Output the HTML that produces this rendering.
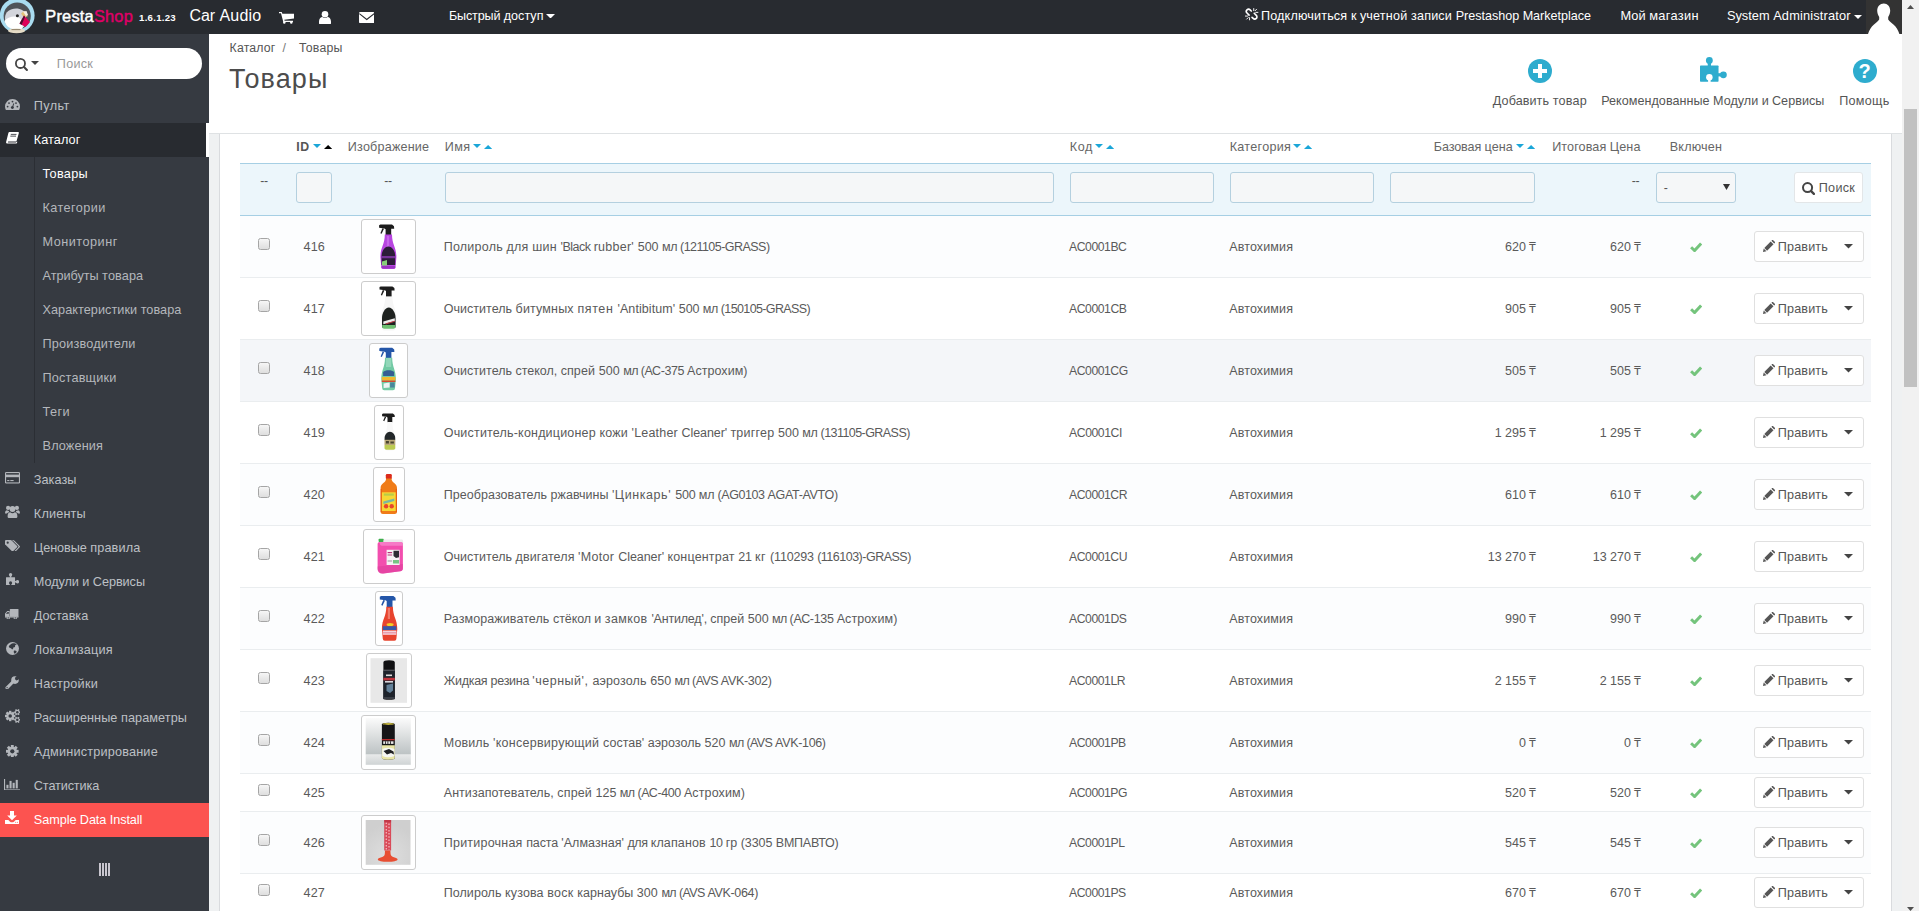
<!DOCTYPE html>
<html lang="ru"><head><meta charset="utf-8"><title>Товары</title>
<style>
*{box-sizing:border-box;margin:0;padding:0}
html,body{width:1919px;height:911px;overflow:hidden;background:#eff1f2;font-family:"Liberation Sans",sans-serif;font-size:12px;color:#555}
.abs{position:absolute}
.t{position:absolute;white-space:nowrap}
b{font-weight:700}
#header{position:absolute;left:0;top:0;width:1902px;height:34px;background:#282b30}
#sidebar{position:absolute;left:0;top:34px;width:209px;height:877px;background:#363a41}
#pagehead{position:absolute;left:209px;top:34px;width:1693px;height:100px;background:#fff;border-bottom:1px solid #dfe2e4}
#panel{position:absolute;left:219px;top:134px;width:1673px;height:800px;background:#fff;border:1px solid #d9dbde;border-top:none}
#scroll{position:absolute;left:1902px;top:0;width:17px;height:911px;background:#f1f1f1}
#thumb{position:absolute;left:1904px;top:109px;width:13px;height:278px;background:#c1c1c1}
.row{position:absolute;left:240px;width:1631px;border-bottom:1px solid #eaedef}
.inp{position:absolute;height:31px;background:#f5f7f8;border:1px solid #b4d0df;border-radius:3px}
.btn{position:absolute;background:#fff;border:1px solid #e0e0e0;border-radius:3px}
.th{position:absolute;background:#fff;border:1px solid #ccc;border-radius:3px;overflow:hidden}
.th svg{display:block}
.cb{position:absolute;width:12px;height:12px;border:1px solid #a5a5a5;border-radius:2.5px;background:linear-gradient(#f6f6f6,#dedede)}
</style></head>
<body>
<div id="header"></div>
<div id="sidebar"></div>
<div id="pagehead"></div>
<div id="panel"></div>
<div id="scroll"></div><div id="thumb"></div>
<svg class="abs" style="left:1907px;top:5px" width="7" height="4" viewBox="0 0 7 4"><polygon fill="#505050" points="0,4 7,4 3.5,0"/></svg>
<svg class="abs" style="left:1907px;top:907px" width="7" height="4" viewBox="0 0 7 4"><polygon fill="#505050" points="0,0 7,0 3.5,4"/></svg>
<svg class="abs" style="left:0;top:0" width="36" height="34" viewBox="0 0 36 34"><circle cx="17.2" cy="15.4" r="17.4" fill="#a9dcf0"/><circle cx="17.2" cy="16" r="13.6" fill="#4f5358"/><path fill="#d3d5dc" d="M5 18c0-6 5-9.500 11-9.500 5 0 8.500 2.500 10.500 5.500L24 27H8C6 25 5 22 5 18z"/><path fill="#fff" d="M4.500 21c2-3 6-4.500 10-4.500 3 0 5 1 6.500 3L23 28c-2 1.500-4 2-6 2-6 0-11-3.500-12.500-9z"/><path fill="#e2c27a" d="M21 13.500l3-2.500 3 2 .5 3.500-4 .5z"/><path fill="#f4efe6" d="M23 11.500l3.500-.5 1.500 4-2 1z"/><path fill="#df0059" d="M24 15.500l6 6.500-4.500 5-6-3.500z"/><path fill="#4a1030" d="M19.500 23.500l4.500-8 1 1.500-3.500 8z"/><circle cx="17.400" cy="15.800" r="1.500" fill="#222"/><ellipse cx="16.500" cy="30.800" rx="8.500" ry="2.400" fill="#e6dcc6"/><path stroke="#7a6a50" stroke-width=".8" d="M11.500 29.600h9"/></svg>
<div class="t" style="left:45.32px;top:6px;font-size:16.4px;line-height:21px;color:#fff;letter-spacing:0.201px;-webkit-text-stroke:0.45px;"><span style="color:#fff">Presta</span><span style="color:#df0067">Shop</span></div>
<div class="t" style="left:139.02px;top:12px;font-size:9.6px;line-height:12px;color:#fff;font-weight:700;letter-spacing:0.288px;">1.6.1.23</div>
<div class="t" style="left:189.54px;top:5px;font-size:16px;line-height:21px;color:#fff;"><span style="letter-spacing:-0.06px">Car </span><span style="letter-spacing:0.17px">Audio</span></div>
<svg class="abs" style="left:278.7px;top:11.5px" width="15" height="12" viewBox="0 0 15 12"><path fill="#fff" d="M0 0h2.7l.7 1.7H15v4.7L5.3 7.7l.3 1.1H14v1.3H4.3L2 1.3H0z"/><circle fill="#fff" cx="5.3" cy="10.4" r="1.25"/><circle fill="#fff" cx="12.3" cy="10.4" r="1.25"/></svg>
<svg class="abs" style="left:318.8px;top:10.6px" width="12" height="13" viewBox="0 0 12 13"><circle fill="#fff" cx="6" cy="3.3" r="3.3"/><path fill="#fff" d="M0 12.6V10.4C0 7.6 1.6 6 3.4 5.9c.7.7 1.6 1.1 2.6 1.1s1.9-.4 2.6-1.1C10.4 6 12 7.6 12 10.4v2.2c0 .2-.2.4-.4.4H.4c-.2 0-.4-.2-.4-.4z"/></svg>
<svg class="abs" style="left:358.7px;top:12px" width="15.5" height="11.2" viewBox="0 0 15.5 11.2"><rect fill="#fff" x="0" y="0" width="15.5" height="11.2" rx="1.2"/><path fill="none" stroke="#282b30" stroke-width="1.1" d="M.3 1.6l7.45 5.9 7.45-5.9"/></svg>
<div class="t" style="left:448.94px;top:8px;font-size:12.6px;line-height:16px;color:#fff;"><span style="letter-spacing:-0.15px">Быстрый </span><span style="letter-spacing:0.02px">доступ</span></div>
<svg class="abs" style="left:546.3px;top:13.7px" width="9" height="4.5" viewBox="0 0 9 4.5"><polygon fill="#fff" points="0,0 9,0 4.5,4.5"/></svg>
<svg class="abs" style="left:1245.3px;top:8.3px" width="13.30" height="12.35" viewBox="0 0 14 13"><g fill="none" stroke="#fff" stroke-width="1.7" stroke-linecap="round" stroke-linejoin="round"><path d="M6.6 3.2L5.4 2a2.3 2.3 0 0 0-3.3 3.3l2.2 2.2"/><path d="M7.4 9.8l1.2 1.2a2.3 2.3 0 0 0 3.3-3.3L9.7 5.5"/></g><g fill="none" stroke="#fff" stroke-width="1" stroke-linecap="round"><path d="M9.2.6v2.2M11.3 4.6h2.3M10.6 2.9l1.6-1.6M4.8 10.2v2.3M.4 8.5h2.3M3.4 10.1l-1.6 1.6"/></g></svg>
<div class="t" style="left:1260.94px;top:8px;font-size:12.6px;line-height:16px;color:#fff;"><span style="letter-spacing:0.17px">Подключиться </span><span style="letter-spacing:-0.06px">к </span><span style="letter-spacing:0.18px">учетной записи </span><span style="letter-spacing:-0.03px">Prestashop Marketplace</span></div>
<div class="t" style="left:1620.53px;top:7px;font-size:12.8px;line-height:17px;color:#fff;"><span style="letter-spacing:-0.00px">Мой </span><span style="letter-spacing:0.34px">магазин</span></div>
<div class="t" style="left:1726.93px;top:7px;font-size:12.8px;line-height:17px;color:#fff;"><span style="letter-spacing:0.00px">System </span><span style="letter-spacing:0.16px">Administrator</span></div>
<svg class="abs" style="left:1853.5px;top:15px" width="8" height="4" viewBox="0 0 8 4"><polygon fill="#fff" points="0,0 8,0 4.0,4"/></svg>
<div class="abs" style="left:1866px;top:0;width:36px;height:34px;background:#333"></div>
<svg class="abs" style="left:1866px;top:0" width="36" height="34" viewBox="0 0 36 34"><path fill="#fff" d="M17.800 3.400c3.700 0 6.400 2.900 6.400 7.200 0 2.600-.8 4.800-2 6.400v2.600c1.500 2 3.500 3.600 5.500 5.200 2.500 2 4.500 5.500 5.700 9.200H2c1.200-3.700 3.200-7.200 5.700-9.200 2-1.600 4-3.200 5.500-5.200v-2.600c-1.200-1.600-2-3.800-2-6.400 0-4.300 2.800-7.200 6.600-7.200z"/></svg>
<div class="abs" style="left:6px;top:48px;width:196px;height:31px;border-radius:15.5px;background:#fff"></div>
<svg class="abs" style="left:15px;top:57.6px" width="13" height="13" viewBox="0 0 13 13"><circle fill="none" stroke="#444" stroke-width="1.8" cx="5.45" cy="5.45" r="4.55"/><path stroke="#444" stroke-width="2.07" stroke-linecap="round" d="M9.00 9.00L11.90 11.90"/></svg>
<svg class="abs" style="left:31px;top:61.2px" width="8" height="4" viewBox="0 0 8 4"><polygon fill="#444" points="0,0 8,0 4.0,4"/></svg>
<div class="t" style="left:56.84px;top:56px;font-size:12.6px;line-height:16px;color:#999;letter-spacing:0.287px;">Поиск</div>
<div class="abs" style="left:0;top:123px;width:206px;height:34px;background:#282b30"></div>
<div class="abs" style="left:206px;top:123px;width:3px;height:34px;background:#fff"></div>
<div class="abs" style="left:34px;top:157px;width:1px;height:306px;background:#2b2e34"></div>
<svg class="abs" style="left:5px;top:98.8px" width="15" height="11.2" viewBox="0 0 15 11.2"><path fill="#b3b6bb" d="M7.5 0A7.5 7.5 0 0 0 0 7.5c0 1.3.3 2.4.9 3.4.1.2.3.3.5.3h12.2c.2 0 .4-.1.5-.3.6-1 .9-2.1.9-3.4A7.5 7.5 0 0 0 7.5 0z"/><g fill="#363a41"><circle cx="2.6" cy="7.6" r=".9"/><circle cx="4" cy="4.1" r=".9"/><circle cx="7.5" cy="2.6" r=".9"/><circle cx="11" cy="4.1" r=".9"/><circle cx="12.4" cy="7.6" r=".9"/><circle cx="7.4" cy="8.6" r="1.5"/></g><path stroke="#363a41" stroke-width="1" stroke-linecap="round" d="M7.6 8.2l1-3.4"/></svg>
<div class="t" style="left:33.74px;top:98px;font-size:12.7px;line-height:17px;color:#bdc0c5;letter-spacing:0.409px;">Пульт</div>
<svg class="abs" style="left:5.8px;top:132px" width="13.06" height="11.59" viewBox="0 0 14.2 12.6"><path fill="#fff" d="M4 0h9.2c.7 0 1 .5.8 1.1L11.6 9.4c-.2.6-.8 1-1.4 1H2.4l-.3.6c-.1.3.1.5.4.5h8.3l.6-1 1 .1-.5 1.3c-.2.4-.6.7-1.1.7H1.6C.6 12.600-.2 11.700.1 10.800L2.600 1.1C2.800.5 3.400 0 4 0z"/><path stroke="#282b30" stroke-width=".9" d="M5.2 2.6h6.2M4.7 4.5h6.2"/></svg>
<div class="t" style="left:33.74px;top:132px;font-size:12.7px;line-height:17px;color:#fff;letter-spacing:0.083px;">Каталог</div>
<div class="t" style="left:42.54px;top:166px;font-size:12.7px;line-height:17px;color:#fff;letter-spacing:0.297px;">Товары</div>
<div class="t" style="left:42.54px;top:200px;font-size:12.7px;line-height:17px;color:#b4b7bc;letter-spacing:0.396px;">Категории</div>
<div class="t" style="left:42.54px;top:234px;font-size:12.7px;line-height:17px;color:#b4b7bc;letter-spacing:0.491px;">Мониторинг</div>
<div class="t" style="left:42.54px;top:268px;font-size:12.7px;line-height:17px;color:#b4b7bc;"><span style="letter-spacing:-0.04px">Атрибуты </span><span style="letter-spacing:0.11px">товара</span></div>
<div class="t" style="left:42.54px;top:302px;font-size:12.7px;line-height:17px;color:#b4b7bc;letter-spacing:0.035px;">Характеристики товара</div>
<div class="t" style="left:42.54px;top:336px;font-size:12.7px;line-height:17px;color:#b4b7bc;letter-spacing:0.165px;">Производители</div>
<div class="t" style="left:42.54px;top:370px;font-size:12.7px;line-height:17px;color:#b4b7bc;letter-spacing:0.182px;">Поставщики</div>
<div class="t" style="left:42.54px;top:404px;font-size:12.7px;line-height:17px;color:#b4b7bc;letter-spacing:0.430px;">Теги</div>
<div class="t" style="left:42.54px;top:438px;font-size:12.7px;line-height:17px;color:#b4b7bc;letter-spacing:0.139px;">Вложения</div>
<div class="t" style="left:33.84px;top:472px;font-size:12.7px;line-height:17px;color:#bdc0c5;letter-spacing:0.027px;">Заказы</div>
<svg class="abs" style="left:4.7px;top:472.3px" width="15.00" height="11.50" viewBox="0 0 15 11.5"><rect fill="#b3b6bb" x="0" y="0" width="15" height="11.5" rx="1.3"/><rect fill="#363a41" x="1.1" y="1.1" width="12.8" height="1.5"/><rect fill="#363a41" x="1.1" y="5.2" width="12.8" height="5.2"/><rect fill="#b3b6bb" x="2.2" y="8" width="2.2" height="1.1"/><rect fill="#b3b6bb" x="5.3" y="8" width="3.3" height="1.1"/></svg>
<div class="t" style="left:33.84px;top:506px;font-size:12.7px;line-height:17px;color:#bdc0c5;letter-spacing:0.158px;">Клиенты</div>
<svg class="abs" style="left:4.8px;top:505.3px" width="15.00" height="13.00" viewBox="0 0 15 13"><g fill="#b3b6bb"><circle cx="3.1" cy="2.9" r="2.1"/><circle cx="11.9" cy="2.9" r="2.1"/><circle cx="7.5" cy="4" r="2.9"/><path d="M0 8.600C0 6.300.8 5.300 2 5.200c.6.500 1.300.8 2 .800-.1.400-.1.800 0 1.300-1 .100-1.600.600-2 1.300H.8C.3 8.600 0 8.400 0 8z"/><path d="M15 8.600C15 6.300 14.200 5.300 13 5.200c-.6.500-1.300.8-2 .800.1.400.1.800 0 1.300 1 .100 1.600.600 2 1.300h1.200c.500 0 .8-.2.800-.6z"/><path d="M2.600 11.400C2.600 8.800 3.700 7.300 5.200 7.300c.6.600 1.400.9 2.300.9s1.700-.3 2.300-.9c1.500 0 2.600 1.500 2.600 4.100 0 .9-.7 1.600-1.700 1.600H4.300c-1 0-1.700-.7-1.700-1.600z"/></g></svg>
<div class="t" style="left:33.84px;top:540px;font-size:12.7px;line-height:17px;color:#bdc0c5;"><span style="letter-spacing:-0.06px">Ценовые </span><span style="letter-spacing:0.11px">правила</span></div>
<svg class="abs" style="left:4.7px;top:539.6px" width="15.20" height="11.60" viewBox="0 0 15.2 11.6"><path fill="#b3b6bb" d="M0 .9C0 .4.400 0 .9 0h4.400c.5 0 1.200.3 1.600.7l5.200 5.200c.4.400.4.900 0 1.300l-3.900 3.900c-.4.400-.9.400-1.300 0L1.700 5.900C1.300 5.500 0 4.800 0 4.300z"/><circle fill="#363a41" cx="2.700" cy="2.700" r="1.100"/><path fill="#b3b6bb" d="M14.700 5.900L9.500.7C9.100.3 8.400 0 7.900 0H6.400c.5 0 1.200.3 1.600.7l5.200 5.200c.4.400.4.900 0 1.300L9.500 10.900l.2.200c.4.400.9.400 1.300 0l3.700-3.900c.4-.4.400-.9 0-1.300z"/></svg>
<div class="t" style="left:33.84px;top:574px;font-size:12.7px;line-height:17px;color:#bdc0c5;letter-spacing:-0.064px;">Модули и Сервисы</div>
<svg class="abs" style="left:5.6px;top:572.8px" width="13.20" height="12.32" viewBox="0 0 15 14"><g fill="#b3b6bb"><rect x="0" y="4.7" width="10.3" height="9.1" rx=".4"/><circle cx="5.200" cy="1.9" r="1.9"/><rect x="4.3" y="3" width="1.8" height="2.4"/><circle cx="13" cy="9.900" r="1.900"/><rect x="10" y="9" width="2.400" height="1.800"/></g><circle fill="#363a41" cx="5.200" cy="11.300" r="1.800"/><rect fill="#363a41" x="4.500" y="12.400" width="1.400" height="1.600"/></svg>
<div class="t" style="left:33.84px;top:608px;font-size:12.7px;line-height:17px;color:#bdc0c5;letter-spacing:-0.012px;">Доставка</div>
<svg class="abs" style="left:5.3px;top:608.8px" width="13.50" height="10.53" viewBox="0 0 15 11.7"><g fill="#b3b6bb"><rect x="5.4" y="0" width="9.600" height="8.600" rx=".6"/><path d="M0 5.400c0-.3.100-.6.300-.8l2-2.200c.2-.2.500-.3.800-.3h2v6.500H0z"/><rect x="0" y="8.200" width="15" height="1.300"/><circle cx="3.600" cy="9.900" r="1.800"/><circle cx="11.400" cy="9.900" r="1.800"/></g><path fill="#363a41" d="M1.200 5.200V4.900l1.700-1.700h1.300v2z"/><circle fill="#363a41" cx="3.600" cy="9.900" r=".8"/><circle fill="#363a41" cx="11.400" cy="9.900" r=".8"/></svg>
<div class="t" style="left:33.84px;top:642px;font-size:12.7px;line-height:17px;color:#bdc0c5;letter-spacing:0.203px;">Локализация</div>
<svg class="abs" style="left:6.1px;top:642.2px" width="13.00" height="13.00" viewBox="0 0 13 13"><circle fill="#b3b6bb" cx="6.5" cy="6.5" r="6.500"/><path fill="#363a41" d="M6.800 1.300c1.500-.2 3 .3 4 1.300-.6.300-1.200.2-1.600.7-.4.500.200 1.100-.300 1.600-.5.500-1.300.200-1.700.900-.3.600.300 1.300-.400 1.500-.8.300-1.300-.500-1.900-1-.7-.600-1.700-.400-2-1.300-.3-.9.500-1.700 1.300-2.300.8-.600 1.700-1.200 2.600-1.400z"/><path fill="#363a41" d="M8.300 8.600c.700-.3 1.600-.1 2.100.400.400.500.100 1.300-.300 1.800-.4.600-1 1-1.600.800-.6-.2-.6-.9-.7-1.500-.1-.6-.1-1.200.500-1.500z"/></svg>
<div class="t" style="left:33.84px;top:676px;font-size:12.7px;line-height:17px;color:#bdc0c5;letter-spacing:0.211px;">Настройки</div>
<svg class="abs" style="left:5.4px;top:675.8px" width="14.00" height="13.70" viewBox="0 -0.2 14 13.7"><path stroke="#b3b6bb" stroke-width="3.1" stroke-linecap="round" d="M2 11.600L8.800 4.800"/><circle fill="#b3b6bb" cx="10" cy="3.900" r="3.800"/><path fill="#363a41" d="M10.300 1.300L13.200-1.600l2.600 2.600-2.900 2.900-1.600.4-1.400-1.400z"/><circle fill="#363a41" cx="2.100" cy="11.500" r=".65"/></svg>
<div class="t" style="left:33.84px;top:710px;font-size:12.7px;line-height:17px;color:#bdc0c5;letter-spacing:0.058px;">Расширенные параметры</div>
<svg class="abs" style="left:4.6px;top:709.3px" width="15.50" height="14.00" viewBox="0 0 15.5 14"><circle fill="#b3b6bb" cx="5.2" cy="7" r="3.85"/><path stroke="#b3b6bb" stroke-width="2.39" d="M7.80 7.00L10.40 7.00"/><path stroke="#b3b6bb" stroke-width="2.39" d="M7.04 8.84L8.88 10.68"/><path stroke="#b3b6bb" stroke-width="2.39" d="M5.20 9.60L5.20 12.20"/><path stroke="#b3b6bb" stroke-width="2.39" d="M3.36 8.84L1.52 10.68"/><path stroke="#b3b6bb" stroke-width="2.39" d="M2.60 7.00L0.00 7.00"/><path stroke="#b3b6bb" stroke-width="2.39" d="M3.36 5.16L1.52 3.32"/><path stroke="#b3b6bb" stroke-width="2.39" d="M5.20 4.40L5.20 1.80"/><path stroke="#b3b6bb" stroke-width="2.39" d="M7.04 5.16L8.88 3.32"/><circle fill="#363a41" cx="5.2" cy="7" r="1.77"/><circle fill="#b3b6bb" cx="12.3" cy="3.2" r="2.37"/><path stroke="#b3b6bb" stroke-width="1.47" d="M13.90 3.20L15.50 3.20"/><path stroke="#b3b6bb" stroke-width="1.47" d="M13.10 4.59L13.90 5.97"/><path stroke="#b3b6bb" stroke-width="1.47" d="M11.50 4.59L10.70 5.97"/><path stroke="#b3b6bb" stroke-width="1.47" d="M10.70 3.20L9.10 3.20"/><path stroke="#b3b6bb" stroke-width="1.47" d="M11.50 1.81L10.70 0.43"/><path stroke="#b3b6bb" stroke-width="1.47" d="M13.10 1.81L13.90 0.43"/><circle fill="#363a41" cx="12.3" cy="3.2" r="1.22"/><circle fill="#b3b6bb" cx="12.3" cy="10.8" r="2.37"/><path stroke="#b3b6bb" stroke-width="1.47" d="M13.90 10.80L15.50 10.80"/><path stroke="#b3b6bb" stroke-width="1.47" d="M13.10 12.19L13.90 13.57"/><path stroke="#b3b6bb" stroke-width="1.47" d="M11.50 12.19L10.70 13.57"/><path stroke="#b3b6bb" stroke-width="1.47" d="M10.70 10.80L9.10 10.80"/><path stroke="#b3b6bb" stroke-width="1.47" d="M11.50 9.41L10.70 8.03"/><path stroke="#b3b6bb" stroke-width="1.47" d="M13.10 9.41L13.90 8.03"/><circle fill="#363a41" cx="12.3" cy="10.8" r="1.22"/></svg>
<div class="t" style="left:33.84px;top:744px;font-size:12.7px;line-height:17px;color:#bdc0c5;letter-spacing:0.180px;">Администрирование</div>
<svg class="abs" style="left:6px;top:744.5px" width="12.60" height="12.60" viewBox="0 0 12.6 12.6"><circle fill="#b3b6bb" cx="6.3" cy="6.3" r="4.66"/><path stroke="#b3b6bb" stroke-width="2.90" d="M9.45 6.30L12.60 6.30"/><path stroke="#b3b6bb" stroke-width="2.90" d="M8.53 8.53L10.75 10.75"/><path stroke="#b3b6bb" stroke-width="2.90" d="M6.30 9.45L6.30 12.60"/><path stroke="#b3b6bb" stroke-width="2.90" d="M4.07 8.53L1.85 10.75"/><path stroke="#b3b6bb" stroke-width="2.90" d="M3.15 6.30L0.00 6.30"/><path stroke="#b3b6bb" stroke-width="2.90" d="M4.07 4.07L1.85 1.85"/><path stroke="#b3b6bb" stroke-width="2.90" d="M6.30 3.15L6.30 0.00"/><path stroke="#b3b6bb" stroke-width="2.90" d="M8.53 4.07L10.75 1.85"/><circle fill="#363a41" cx="6.3" cy="6.3" r="2.14"/></svg>
<div class="t" style="left:33.84px;top:778px;font-size:12.7px;line-height:17px;color:#bdc0c5;letter-spacing:-0.138px;">Статистика</div>
<svg class="abs" style="left:4.3px;top:778.5px" width="16.00" height="11.50" viewBox="0 0 16 11.5"><g fill="#b3b6bb"><rect x="0" y="0" width="1.100" height="11.500"/><rect x="0" y="10.400" width="16" height="1.100"/><rect x="2.400" y="5.800" width="2.100" height="3.600"/><rect x="5.500" y="1.900" width="2.100" height="7.500"/><rect x="8.600" y="3.800" width="2.100" height="5.600"/><rect x="11.700" y=".9" width="2.100" height="8.500"/></g></svg>
<div class="abs" style="left:0;top:803px;width:209px;height:34px;background:#fc5350"></div>
<svg class="abs" style="left:5.1px;top:810.6px" width="14" height="13" viewBox="0 0 14 13"><g fill="#fff"><path d="M5 0h4v4.500h2.800L7 9.300 2.200 4.500H5z"/><path d="M0 8.900h3.300l1.500 1.500c1.200 1.200 3.200 1.200 4.400 0l1.500-1.500H14v3.500c0 .3-.3.600-.6.600H.6c-.3 0-.6-.3-.6-.6z"/></g><circle fill="#fc5350" cx="10.700" cy="11.300" r=".5"/><circle fill="#fc5350" cx="12.400" cy="11.300" r=".5"/></svg>
<div class="t" style="left:33.84px;top:812px;font-size:12.7px;line-height:17px;color:#fff;letter-spacing:-0.080px;">Sample Data Install</div>
<div class="abs" style="left:99px;top:862.5px;width:11px;height:13.5px;background:repeating-linear-gradient(90deg,#c9c6cf 0,#c9c6cf 2px,transparent 2px,transparent 3px)"></div>
<div class="t" style="left:229.56px;top:40px;font-size:12.3px;line-height:16px;color:#555;letter-spacing:0.179px;">Каталог</div>
<div class="t" style="left:282.56px;top:40px;font-size:12.3px;line-height:16px;color:#777;">/</div>
<div class="t" style="left:299.06px;top:40px;font-size:12.3px;line-height:16px;color:#555;letter-spacing:0.216px;">Товары</div>
<div class="t" style="left:228.88px;top:62px;font-size:27px;line-height:35px;color:#4c4c4c;letter-spacing:1.120px;">Товары</div>
<svg class="abs" style="left:1527.7px;top:58.9px" width="24" height="24" viewBox="0 0 24 24"><circle fill="#2eacce" cx="12" cy="12" r="12"/><path fill="#fff" d="M10 5h4v5h5v4h-5v5h-4v-5H5v-4h5z"/></svg>
<svg class="abs" style="left:1699.8px;top:56.5px" width="27.0" height="25.2" viewBox="0 0 15 14"><g fill="#2eacce"><rect x="0" y="4.7" width="10.3" height="9.1" rx=".4"/><circle cx="5.200" cy="1.9" r="1.9"/><rect x="4.3" y="3" width="1.8" height="2.4"/><circle cx="13" cy="9.900" r="1.900"/><rect x="10" y="9" width="2.400" height="1.800"/></g><circle fill="#fff" cx="5.200" cy="11.300" r="1.800"/><rect fill="#fff" x="4.500" y="12.400" width="1.400" height="1.600"/></svg>
<div class="abs" style="left:1852.5px;top:58.9px;width:24px;height:24px;border-radius:12px;background:#2eacce"></div>
<div class="t" style="left:1858.39px;top:58px;font-size:20px;line-height:26px;color:#fff;font-weight:700;">?</div>
<div class="t" style="left:1492.84px;top:93px;font-size:12.6px;line-height:16px;color:#555;"><span style="letter-spacing:0.07px">Добавить </span><span style="letter-spacing:0.23px">товар</span></div>
<div class="t" style="left:1601.24px;top:93px;font-size:12.6px;line-height:16px;color:#555;"><span style="letter-spacing:0.02px">Рекомендованные Модули </span><span style="letter-spacing:-0.19px">и </span><span style="letter-spacing:0.04px">Сервисы</span></div>
<div class="t" style="left:1839.24px;top:93px;font-size:12.6px;line-height:16px;color:#555;letter-spacing:0.275px;">Помощь</div>
<div class="t" style="left:296.26px;top:139px;font-size:12.3px;line-height:16px;color:#555;font-weight:700;letter-spacing:0.663px;">ID</div>
<svg class="abs" style="left:313.1px;top:144.2px" width="8" height="4" viewBox="0 0 8 4"><polygon fill="#1ba6d8" points="0,0 8,0 4.0,4"/></svg>
<svg class="abs" style="left:323.6px;top:144.8px" width="8.2" height="4" viewBox="0 0 8.2 4"><polygon fill="#000" points="0,4 8.2,4 4.1,0"/></svg>
<div class="t" style="left:347.84px;top:139px;font-size:12.6px;line-height:16px;color:#666;letter-spacing:0.193px;">Изображение</div>
<div class="t" style="left:444.74px;top:139px;font-size:12.6px;line-height:16px;color:#666;letter-spacing:0.358px;">Имя</div>
<svg class="abs" style="left:473px;top:144.2px" width="8" height="4" viewBox="0 0 8 4"><polygon fill="#1ba6d8" points="0,0 8,0 4.0,4"/></svg>
<svg class="abs" style="left:483.5px;top:144.8px" width="8.2" height="4" viewBox="0 0 8.2 4"><polygon fill="#1ba6d8" points="0,4 8.2,4 4.1,0"/></svg>
<div class="t" style="left:1069.74px;top:139px;font-size:12.6px;line-height:16px;color:#666;letter-spacing:0.663px;">Код</div>
<svg class="abs" style="left:1095px;top:144.2px" width="8" height="4" viewBox="0 0 8 4"><polygon fill="#1ba6d8" points="0,0 8,0 4.0,4"/></svg>
<svg class="abs" style="left:1105.5px;top:144.8px" width="8.2" height="4" viewBox="0 0 8.2 4"><polygon fill="#1ba6d8" points="0,4 8.2,4 4.1,0"/></svg>
<div class="t" style="left:1229.74px;top:139px;font-size:12.6px;line-height:16px;color:#666;letter-spacing:0.277px;">Категория</div>
<svg class="abs" style="left:1293px;top:144.2px" width="8" height="4" viewBox="0 0 8 4"><polygon fill="#1ba6d8" points="0,0 8,0 4.0,4"/></svg>
<svg class="abs" style="left:1303.5px;top:144.8px" width="8.2" height="4" viewBox="0 0 8.2 4"><polygon fill="#1ba6d8" points="0,4 8.2,4 4.1,0"/></svg>
<div class="t" style="left:1433.74px;top:139px;font-size:12.6px;line-height:16px;color:#666;"><span style="letter-spacing:-0.11px">Базовая </span><span style="letter-spacing:0.06px">цена</span></div>
<svg class="abs" style="left:1516px;top:144.2px" width="8" height="4" viewBox="0 0 8 4"><polygon fill="#1ba6d8" points="0,0 8,0 4.0,4"/></svg>
<svg class="abs" style="left:1526.5px;top:144.8px" width="8.2" height="4" viewBox="0 0 8.2 4"><polygon fill="#1ba6d8" points="0,4 8.2,4 4.1,0"/></svg>
<div class="t" style="left:1552.24px;top:139px;font-size:12.6px;line-height:16px;color:#666;letter-spacing:0.085px;">Итоговая Цена</div>
<div class="t" style="left:1669.74px;top:139px;font-size:12.6px;line-height:16px;color:#666;letter-spacing:0.170px;">Включен</div>
<div class="abs" style="left:240px;top:163px;width:1631px;height:53px;background:#ecf6fb;border-top:1px solid #a6cfe4;border-bottom:1px solid #a6cfe4"></div>
<div class="t" style="left:260.26px;top:173px;font-size:12.3px;line-height:16px;color:#555;letter-spacing:-0.295px;">--</div>
<div class="t" style="left:384.26px;top:173px;font-size:12.3px;line-height:16px;color:#555;letter-spacing:-0.295px;">--</div>
<div class="t" style="left:1631.76px;top:173px;font-size:12.3px;line-height:16px;color:#555;letter-spacing:-0.295px;">--</div>
<div class="inp" style="left:296px;top:172px;width:36px"></div>
<div class="inp" style="left:445px;top:172px;width:609px"></div>
<div class="inp" style="left:1070px;top:172px;width:144px"></div>
<div class="inp" style="left:1230px;top:172px;width:144px"></div>
<div class="inp" style="left:1390px;top:172px;width:145px"></div>
<div class="inp" style="left:1656px;top:172px;width:80px"></div>
<div class="t" style="left:1663.76px;top:180px;font-size:12.3px;line-height:16px;color:#555;letter-spacing:-0.295px;">-</div>
<svg class="abs" style="left:1722.6px;top:183.7px" width="7" height="6" viewBox="0 0 7 6"><polygon fill="#333" points="0,0 7,0 3.5,6"/></svg>
<div class="btn" style="left:1793.5px;top:172px;width:69px;height:31px;border-color:#e3e6e8"></div>
<svg class="abs" style="left:1802.3px;top:181.6px" width="13" height="13" viewBox="0 0 13 13"><circle fill="none" stroke="#444" stroke-width="2" cx="5.55" cy="5.55" r="4.55"/><path stroke="#444" stroke-width="2.30" stroke-linecap="round" d="M9.10 9.10L11.90 11.90"/></svg>
<div class="t" style="left:1818.74px;top:180px;font-size:12.6px;line-height:16px;color:#555;letter-spacing:0.312px;">Поиск</div>
<div class="row" style="top:216px;height:62px;background:#fcfdfe"></div>
<div class="cb" style="left:258px;top:238px"></div>
<div class="t" style="left:303.54px;top:239px;font-size:12.6px;line-height:16px;color:#5a5a5a;letter-spacing:0.148px;">416</div>
<div class="th" style="left:361.0px;top:219px;width:55px;height:55px"><svg width="53" height="53" viewBox="0 0 53 53"><polygon fill="#1c1c1c" points="17.1,5.3 18.4,4.6 30.0,4.6 32.0,6.2 32.2,8.7 29.2,8.7 29.2,15.0 23.6,15.0 23.6,9.2 22.4,8.5 17.1,7.8"/><polygon fill="#1c1c1c" points="20.4,8.2 22.0,8.8 19.6,13.8 18.4,13.2"/><path fill="#b845e0"  d="M22.799999999999997 14.6C22.799999999999997 24.9 18.4 27.0 18.4 37.3L19.299999999999997 47Q19.299999999999997 49 21.299999999999997 49H31.5Q33.5 49 33.5 47L34.4 37.3C34.4 27.0 30.0 24.9 30.0 14.6Z"/><path fill="#d684f2" d="M24.9 16h2.200v12h-2.200z" opacity=".55"/><path fill="#2c1c38" d="M19.599999999999998 45V36c0-5 3-9.500 6.800-9.500s6.800 4.500 6.800 9.500v9z"/><path fill="#8a3ab0" d="M19.599999999999998 36h13.600v2.200H19.599999999999998z" opacity=".8"/><path fill="#86d078" d="M20.0 41.500l5-1.500v5.500h-5z"/><rect fill="#9a34c2" x="19.4" y="46" width="14" height="2.400" rx="1"/></svg></div>
<div class="t" style="left:443.75px;top:239px;font-size:12.5px;line-height:16px;color:#5a5a5a;"><span style="letter-spacing:0.22px">Полироль для шин </span><span style="letter-spacing:-0.48px">'Black </span><span style="letter-spacing:0.26px">rubber' </span><span style="letter-spacing:-0.01px">500 </span><span style="letter-spacing:-0.45px">мл </span><span style="letter-spacing:-0.54px">(121105-GRASS)</span></div>
<div class="t" style="left:1069.07px;top:239px;font-size:12.2px;line-height:16px;color:#5a5a5a;letter-spacing:-0.453px;">AC0001BC</div>
<div class="t" style="left:1229.15px;top:239px;font-size:12.5px;line-height:16px;color:#5a5a5a;letter-spacing:0.149px;">Автохимия</div>
<div class="t" style="left:1505.11px;top:239px;font-size:12.5px;line-height:16px;color:#5a5a5a;">620 ₸</div>
<div class="t" style="left:1610.11px;top:239px;font-size:12.5px;line-height:16px;color:#5a5a5a;">620 ₸</div>
<svg class="abs" style="left:1690px;top:242.3px" width="12.2" height="10.2" viewBox="0 0 12.2 10.2"><path fill="none" stroke="#74c47c" stroke-width="2.900" d="M1.100 5.200l3.500 3.400L11.100 1.500"/></svg>
<div class="btn" style="left:1754px;top:231px;width:110px;height:31px"></div>
<svg class="abs" style="left:1762.5px;top:240px" width="12.2" height="12" viewBox="0 0 12.2 12"><g fill="#555"><path d="M0 12l.7-3.400 2.700 2.700z"/><path d="M1.300 7.900L7.700 1.500l2.800 2.800-6.400 6.400z"/><path d="M8.400.8l.6-.6c.3-.3.900-.3 1.200 0l1.600 1.600c.3.300.3.900 0 1.200l-.6.600z"/></g></svg>
<div class="t" style="left:1777.84px;top:239px;font-size:12.6px;line-height:16px;color:#555;letter-spacing:0.148px;">Править</div>
<svg class="abs" style="left:1843.5px;top:244.3px" width="9" height="4.5" viewBox="0 0 9 4.5"><polygon fill="#444" points="0,0 9,0 4.5,4.5"/></svg>
<div class="row" style="top:278px;height:62px;background:#fff"></div>
<div class="cb" style="left:258px;top:300px"></div>
<div class="t" style="left:303.54px;top:301px;font-size:12.6px;line-height:16px;color:#5a5a5a;letter-spacing:0.148px;">417</div>
<div class="th" style="left:361.0px;top:281px;width:55px;height:55px"><svg width="53" height="53" viewBox="0 0 53 53"><polygon fill="#1c1c1c" points="17.5,5.1 18.8,4.4 30.4,4.4 32.4,6.0 32.6,8.5 29.6,8.5 29.6,14.8 24.0,14.8 24.0,9.0 22.8,8.3 17.5,7.6"/><polygon fill="#1c1c1c" points="20.8,8.0 22.4,8.6 20.0,13.6 18.8,13.0"/><path fill="#f6f6f6"  d="M23.2 14.6C23.2 24.8 19.200000000000003 26.8 19.200000000000003 37.0L20.1 46.5Q20.1 48.5 22.1 48.5H31.5Q33.5 48.5 33.5 46.5L34.4 37.0C34.4 26.8 30.400000000000002 24.8 30.400000000000002 14.6Z"/><path fill="#1e2220" d="M20.0 45.500V36c0-5 3-10.500 6.800-10.500s6.800 5.500 6.800 10.500v9.500z"/><path fill="#ececec" d="M21.3 39.500l11.500-3.200v2.600l-11.500 3.400z"/><path fill="#c04048" d="M23.8 41.300l9-2.500v1l-9 2.600z"/><path fill="#6cc070" d="M20.200000000000003 43h13.200v2c0 1-1 1.700-2 1.700h-9.200c-1 0-2-.7-2-1.700z"/></svg></div>
<div class="t" style="left:443.75px;top:301px;font-size:12.5px;line-height:16px;color:#5a5a5a;"><span style="letter-spacing:0.02px">Очиститель </span><span style="letter-spacing:0.17px">битумных </span><span style="letter-spacing:0.60px">пятен </span><span style="letter-spacing:0.08px">'Antibitum' </span><span style="letter-spacing:-0.08px">500 </span><span style="letter-spacing:-0.45px">мл </span><span style="letter-spacing:-0.63px">(150105-GRASS)</span></div>
<div class="t" style="left:1069.07px;top:301px;font-size:12.2px;line-height:16px;color:#5a5a5a;letter-spacing:-0.453px;">AC0001CB</div>
<div class="t" style="left:1229.15px;top:301px;font-size:12.5px;line-height:16px;color:#5a5a5a;letter-spacing:0.149px;">Автохимия</div>
<div class="t" style="left:1505.11px;top:301px;font-size:12.5px;line-height:16px;color:#5a5a5a;">905 ₸</div>
<div class="t" style="left:1610.11px;top:301px;font-size:12.5px;line-height:16px;color:#5a5a5a;">905 ₸</div>
<svg class="abs" style="left:1690px;top:304.3px" width="12.2" height="10.2" viewBox="0 0 12.2 10.2"><path fill="none" stroke="#74c47c" stroke-width="2.900" d="M1.100 5.200l3.500 3.400L11.100 1.500"/></svg>
<div class="btn" style="left:1754px;top:293px;width:110px;height:31px"></div>
<svg class="abs" style="left:1762.5px;top:302px" width="12.2" height="12" viewBox="0 0 12.2 12"><g fill="#555"><path d="M0 12l.7-3.400 2.700 2.700z"/><path d="M1.300 7.900L7.700 1.500l2.800 2.800-6.400 6.400z"/><path d="M8.400.8l.6-.6c.3-.3.900-.3 1.200 0l1.600 1.600c.3.300.3.900 0 1.200l-.6.600z"/></g></svg>
<div class="t" style="left:1777.84px;top:301px;font-size:12.6px;line-height:16px;color:#555;letter-spacing:0.148px;">Править</div>
<svg class="abs" style="left:1843.5px;top:306.3px" width="9" height="4.5" viewBox="0 0 9 4.5"><polygon fill="#444" points="0,0 9,0 4.5,4.5"/></svg>
<div class="row" style="top:340px;height:62px;background:#f4f6f9"></div>
<div class="cb" style="left:258px;top:362px"></div>
<div class="t" style="left:303.54px;top:363px;font-size:12.6px;line-height:16px;color:#5a5a5a;letter-spacing:0.148px;">418</div>
<div class="th" style="left:369.0px;top:343px;width:39px;height:55px"><svg width="37" height="53" viewBox="0 0 37 53"><polygon fill="#2456a8" points="9.3,4.5 10.6,3.8 22.2,3.8 24.2,5.4 24.4,7.9 21.4,7.9 21.4,14.2 15.8,14.2 15.8,8.4 14.6,7.7 9.3,7.0"/><polygon fill="#2456a8" points="12.6,7.4 14.2,8.0 11.8,13.0 10.6,12.4"/><path fill="#72caa4"  d="M15.000000000000002 13.8C15.000000000000002 23.5 11.3 25.5 11.3 35.2L12.200000000000001 44.2Q12.200000000000001 46.2 14.200000000000001 46.2H23.000000000000004Q25.000000000000004 46.2 25.000000000000004 44.2L25.900000000000002 35.2C25.900000000000002 25.5 22.200000000000003 23.5 22.200000000000003 13.8Z"/><path fill="#a8e0c8" d="M16.0 14h5.200v9h-5.200z" opacity=".6"/><path fill="#2a4a90" d="M13.100000000000001 28c2-2.500 9-2.500 11 0v4h-11z" opacity=".85"/><rect fill="#f0b830" x="11.8" y="33" width="13.600" height="3.600"/><rect fill="#d84830" x="11.8" y="36.600" width="13.600" height="1.400"/><path fill="#eef4f4" d="M13.600000000000001 39.500l6-1v5l-6 .5z"/><rect fill="#3a6a9a" x="20.1" y="38.500" width="4.500" height="5" opacity=".7"/></svg></div>
<div class="t" style="left:443.75px;top:363px;font-size:12.5px;line-height:16px;color:#5a5a5a;"><span style="letter-spacing:0.02px">Очиститель </span><span style="letter-spacing:-0.03px">стекол, </span><span style="letter-spacing:0.11px">спрей </span><span style="letter-spacing:0.05px">500 </span><span style="letter-spacing:-0.61px">мл </span><span style="letter-spacing:-0.43px">(АС-375 </span><span style="letter-spacing:0.05px">Астрохим)</span></div>
<div class="t" style="left:1069.07px;top:363px;font-size:12.2px;line-height:16px;color:#5a5a5a;letter-spacing:-0.462px;">AC0001CG</div>
<div class="t" style="left:1229.15px;top:363px;font-size:12.5px;line-height:16px;color:#5a5a5a;letter-spacing:0.149px;">Автохимия</div>
<div class="t" style="left:1505.11px;top:363px;font-size:12.5px;line-height:16px;color:#5a5a5a;">505 ₸</div>
<div class="t" style="left:1610.11px;top:363px;font-size:12.5px;line-height:16px;color:#5a5a5a;">505 ₸</div>
<svg class="abs" style="left:1690px;top:366.3px" width="12.2" height="10.2" viewBox="0 0 12.2 10.2"><path fill="none" stroke="#74c47c" stroke-width="2.900" d="M1.100 5.200l3.500 3.400L11.100 1.500"/></svg>
<div class="btn" style="left:1754px;top:355px;width:110px;height:31px"></div>
<svg class="abs" style="left:1762.5px;top:364px" width="12.2" height="12" viewBox="0 0 12.2 12"><g fill="#555"><path d="M0 12l.7-3.400 2.700 2.700z"/><path d="M1.300 7.900L7.700 1.500l2.800 2.800-6.400 6.400z"/><path d="M8.400.8l.6-.6c.3-.3.900-.3 1.200 0l1.600 1.600c.3.300.3.900 0 1.200l-.6.600z"/></g></svg>
<div class="t" style="left:1777.84px;top:363px;font-size:12.6px;line-height:16px;color:#555;letter-spacing:0.148px;">Править</div>
<svg class="abs" style="left:1843.5px;top:368.3px" width="9" height="4.5" viewBox="0 0 9 4.5"><polygon fill="#444" points="0,0 9,0 4.5,4.5"/></svg>
<div class="row" style="top:402px;height:62px;background:#fff"></div>
<div class="cb" style="left:258px;top:424px"></div>
<div class="t" style="left:303.54px;top:425px;font-size:12.6px;line-height:16px;color:#5a5a5a;letter-spacing:0.148px;">419</div>
<div class="th" style="left:373.5px;top:405px;width:30px;height:55px"><svg width="28" height="53" viewBox="0 0 28 53"><polygon fill="#1c1c1c" points="7.1,8.1 8.2,7.5 17.9,7.5 19.6,8.9 19.8,11.0 17.3,11.0 17.3,16.3 12.5,16.3 12.5,11.4 11.5,10.8 7.1,10.2"/><polygon fill="#1c1c1c" points="9.9,10.6 11.2,11.1 9.2,15.3 8.2,14.8"/><path fill="#f8f8f8"  d="M12.5 16C12.5 24.6 9.2 26.3 9.2 34.9L10.1 42.6Q10.1 44.6 12.1 44.6H17.700000000000003Q19.700000000000003 44.6 19.700000000000003 42.6L20.6 34.9C20.6 26.3 17.3 24.6 17.3 16Z"/><path fill="#23282a" d="M9.600000000000001 34V32c0-3 2.300-6.200 5.300-6.200s5.300 3.200 5.300 6.200v2z"/><rect fill="#b9a878" x="9.5" y="33.800" width="10.800" height="5.200"/><path fill="#4a4630" d="M10.9 35h3v2.500h-3zM15.4 35.500h3.500v2h-3.500z"/><path fill="#bccb52" d="M9.5 39h10.800v3c0 1-.8 1.700-1.800 1.700h-7.200c-1 0-1.800-.7-1.800-1.700z"/></svg></div>
<div class="t" style="left:443.75px;top:425px;font-size:12.5px;line-height:16px;color:#5a5a5a;"><span style="letter-spacing:0.19px">Очиститель-кондиционер </span><span style="letter-spacing:0.16px">кожи </span><span style="letter-spacing:0.20px">'Leather </span><span style="letter-spacing:-0.09px">Cleaner' </span><span style="letter-spacing:0.21px">триггер </span><span style="letter-spacing:-0.01px">500 </span><span style="letter-spacing:-0.36px">мл </span><span style="letter-spacing:-0.56px">(131105-GRASS)</span></div>
<div class="t" style="left:1069.07px;top:425px;font-size:12.2px;line-height:16px;color:#5a5a5a;letter-spacing:-0.423px;">AC0001CI</div>
<div class="t" style="left:1229.15px;top:425px;font-size:12.5px;line-height:16px;color:#5a5a5a;letter-spacing:0.149px;">Автохимия</div>
<div class="t" style="left:1494.68px;top:425px;font-size:12.5px;line-height:16px;color:#5a5a5a;">1 295 ₸</div>
<div class="t" style="left:1599.68px;top:425px;font-size:12.5px;line-height:16px;color:#5a5a5a;">1 295 ₸</div>
<svg class="abs" style="left:1690px;top:428.3px" width="12.2" height="10.2" viewBox="0 0 12.2 10.2"><path fill="none" stroke="#74c47c" stroke-width="2.900" d="M1.100 5.200l3.500 3.400L11.100 1.500"/></svg>
<div class="btn" style="left:1754px;top:417px;width:110px;height:31px"></div>
<svg class="abs" style="left:1762.5px;top:426px" width="12.2" height="12" viewBox="0 0 12.2 12"><g fill="#555"><path d="M0 12l.7-3.400 2.700 2.700z"/><path d="M1.300 7.900L7.700 1.500l2.800 2.800-6.400 6.400z"/><path d="M8.400.8l.6-.6c.3-.3.900-.3 1.200 0l1.600 1.600c.3.300.3.900 0 1.200l-.6.600z"/></g></svg>
<div class="t" style="left:1777.84px;top:425px;font-size:12.6px;line-height:16px;color:#555;letter-spacing:0.148px;">Править</div>
<svg class="abs" style="left:1843.5px;top:430.3px" width="9" height="4.5" viewBox="0 0 9 4.5"><polygon fill="#444" points="0,0 9,0 4.5,4.5"/></svg>
<div class="row" style="top:464px;height:62px;background:#fcfdfe"></div>
<div class="cb" style="left:258px;top:486px"></div>
<div class="t" style="left:303.54px;top:487px;font-size:12.6px;line-height:16px;color:#5a5a5a;letter-spacing:0.148px;">420</div>
<div class="th" style="left:372.5px;top:467px;width:32px;height:55px"><svg width="30" height="53" viewBox="0 0 30 53"><rect fill="#dc2c1c" x="11.8" y="6" width="6" height="5.200" rx="1.200"/><path fill="#f07c18" d="M12.100000000000001 10.600h5.400c0 4.500 5.500 4.500 5.500 9.500v23.600c0 1.300-1 2.300-2.300 2.300h-11.800c-1.300 0-2.300-1-2.300-2.300V20.100c0-5 5.500-5 5.500-9.500z"/><path fill="#e2560e" d="M6.600000000000001 21h1.300v23h-1.300zM21.700000000000003 21h1.300v23h-1.300z" opacity=".7"/><rect fill="#f6d834" x="7.9" y="24.300" width="13.800" height="18.700"/><rect fill="#9ec850" x="9.8" y="25.500" width="10" height="2.200" opacity=".7"/><path fill="#58b0c0" d="M9.3 33.500l11-3v2.600l-11 3z" opacity=".8"/><circle fill="#e8452c" cx="12.100000000000001" cy="38.300" r="2.200"/><circle fill="#e8452c" cx="17.7" cy="38.300" r="2.200"/></svg></div>
<div class="t" style="left:443.75px;top:487px;font-size:12.5px;line-height:16px;color:#5a5a5a;"><span style="letter-spacing:0.06px">Преобразователь </span><span style="letter-spacing:0.01px">ржавчины </span><span style="letter-spacing:0.58px">'Цинкарь' </span><span style="letter-spacing:-0.20px">500 мл </span><span style="letter-spacing:-0.43px">(AG0103 </span><span style="letter-spacing:-0.35px">AGAT-AVTO)</span></div>
<div class="t" style="left:1069.07px;top:487px;font-size:12.2px;line-height:16px;color:#5a5a5a;letter-spacing:-0.457px;">AC0001CR</div>
<div class="t" style="left:1229.15px;top:487px;font-size:12.5px;line-height:16px;color:#5a5a5a;letter-spacing:0.149px;">Автохимия</div>
<div class="t" style="left:1505.11px;top:487px;font-size:12.5px;line-height:16px;color:#5a5a5a;">610 ₸</div>
<div class="t" style="left:1610.11px;top:487px;font-size:12.5px;line-height:16px;color:#5a5a5a;">610 ₸</div>
<svg class="abs" style="left:1690px;top:490.3px" width="12.2" height="10.2" viewBox="0 0 12.2 10.2"><path fill="none" stroke="#74c47c" stroke-width="2.900" d="M1.100 5.200l3.500 3.400L11.100 1.500"/></svg>
<div class="btn" style="left:1754px;top:479px;width:110px;height:31px"></div>
<svg class="abs" style="left:1762.5px;top:488px" width="12.2" height="12" viewBox="0 0 12.2 12"><g fill="#555"><path d="M0 12l.7-3.400 2.700 2.700z"/><path d="M1.300 7.900L7.700 1.500l2.800 2.800-6.400 6.400z"/><path d="M8.400.8l.6-.6c.3-.3.900-.3 1.200 0l1.600 1.600c.3.300.3.900 0 1.200l-.6.600z"/></g></svg>
<div class="t" style="left:1777.84px;top:487px;font-size:12.6px;line-height:16px;color:#555;letter-spacing:0.148px;">Править</div>
<svg class="abs" style="left:1843.5px;top:492.3px" width="9" height="4.5" viewBox="0 0 9 4.5"><polygon fill="#444" points="0,0 9,0 4.5,4.5"/></svg>
<div class="row" style="top:526px;height:62px;background:#fff"></div>
<div class="cb" style="left:258px;top:548px"></div>
<div class="t" style="left:303.54px;top:549px;font-size:12.6px;line-height:16px;color:#5a5a5a;letter-spacing:0.148px;">421</div>
<div class="th" style="left:362.5px;top:529px;width:52px;height:55px"><svg width="50" height="53" viewBox="0 0 50 53"><rect fill="#3eae4c" x="14.600" y="8.800" width="5.200" height="3.200" rx=".8"/><path fill="#eceaec" d="M19.500 9.600h18c1 0 1.600.6 1.600 1.600v3.200H19.500z"/><path fill="#f24eae" d="M13.600 14.300c0-1.400.9-2.300 2.300-2.300h20.700c1.400 0 2.300.9 2.300 2.300v23.900c0 1.700-.9 2.700-2.600 3l-17 2.200c-3.400.4-5.700-1.500-5.700-4.500z"/><path fill="#f684cc" d="M15.600 12h21c1.400 0 2.300.9 2.300 2.300v1.500H18c-1.500 0-2.400-1.500-2.400-3.800z" opacity=".8"/><path fill="#dc3c9a" d="M13.600 36.500l25.300-2.500v4.200c0 1.700-.9 2.700-2.600 3l-17 2.200c-3.400.4-5.700-1.500-5.700-4.500z" opacity=".55"/><rect fill="#f6f2f6" x="22.600" y="19.800" width="13" height="15.200"/><path fill="#2c2c34" d="M29.500 20.800h5.500v6.500l-3 .7-2.500-2z"/><rect fill="#b43478" x="23.600" y="22" width="4.500" height="1.200"/><rect fill="#b43478" x="23.600" y="24.500" width="4.500" height="1"/><rect fill="#58b868" x="29" y="30" width="6" height="3.500" opacity=".8"/><rect fill="#999" x="23.600" y="30.500" width="4.500" height="1"/></svg></div>
<div class="t" style="left:443.75px;top:549px;font-size:12.5px;line-height:16px;color:#5a5a5a;"><span style="letter-spacing:0.02px">Очиститель </span><span style="letter-spacing:0.10px">двигателя </span><span style="letter-spacing:0.32px">'Motor </span><span style="letter-spacing:-0.04px">Cleaner' </span><span style="letter-spacing:0.18px">концентрат </span><span style="letter-spacing:-0.20px">21 </span><span style="letter-spacing:0.50px">кг </span><span style="letter-spacing:-0.17px">(110293 </span><span style="letter-spacing:-0.50px">(116103)-GRASS)</span></div>
<div class="t" style="left:1069.07px;top:549px;font-size:12.2px;line-height:16px;color:#5a5a5a;letter-spacing:-0.457px;">AC0001CU</div>
<div class="t" style="left:1229.15px;top:549px;font-size:12.5px;line-height:16px;color:#5a5a5a;letter-spacing:0.149px;">Автохимия</div>
<div class="t" style="left:1487.73px;top:549px;font-size:12.5px;line-height:16px;color:#5a5a5a;">13 270 ₸</div>
<div class="t" style="left:1592.73px;top:549px;font-size:12.5px;line-height:16px;color:#5a5a5a;">13 270 ₸</div>
<svg class="abs" style="left:1690px;top:552.3px" width="12.2" height="10.2" viewBox="0 0 12.2 10.2"><path fill="none" stroke="#74c47c" stroke-width="2.900" d="M1.100 5.200l3.500 3.400L11.100 1.500"/></svg>
<div class="btn" style="left:1754px;top:541px;width:110px;height:31px"></div>
<svg class="abs" style="left:1762.5px;top:550px" width="12.2" height="12" viewBox="0 0 12.2 12"><g fill="#555"><path d="M0 12l.7-3.400 2.700 2.700z"/><path d="M1.300 7.900L7.700 1.500l2.800 2.800-6.400 6.400z"/><path d="M8.400.8l.6-.6c.3-.3.900-.3 1.200 0l1.600 1.600c.3.300.3.900 0 1.200l-.6.600z"/></g></svg>
<div class="t" style="left:1777.84px;top:549px;font-size:12.6px;line-height:16px;color:#555;letter-spacing:0.148px;">Править</div>
<svg class="abs" style="left:1843.5px;top:554.3px" width="9" height="4.5" viewBox="0 0 9 4.5"><polygon fill="#444" points="0,0 9,0 4.5,4.5"/></svg>
<div class="row" style="top:588px;height:62px;background:#fcfdfe"></div>
<div class="cb" style="left:258px;top:610px"></div>
<div class="t" style="left:303.54px;top:611px;font-size:12.6px;line-height:16px;color:#5a5a5a;letter-spacing:0.148px;">422</div>
<div class="th" style="left:374.5px;top:591px;width:28px;height:55px"><svg width="26" height="53" viewBox="0 0 26 53"><polygon fill="#2456a8" points="3.8,4.8 5.2,4.1 17.4,4.1 19.5,5.8 19.7,8.4 16.5,8.4 16.5,15.0 10.7,15.0 10.7,8.9 9.4,8.2 3.8,7.5"/><polygon fill="#2456a8" points="7.3,7.9 9.0,8.5 6.5,13.8 5.2,13.1"/><path fill="#e8442e"  d="M10.3 14.8C10.3 25.0 5.8999999999999995 27.0 5.8999999999999995 37.2L6.8 46.8Q6.8 48.8 8.799999999999999 48.8H18.400000000000002Q20.400000000000002 48.8 20.400000000000002 46.8L21.3 37.2C21.3 27.0 16.9 25.0 16.9 14.8Z"/><path fill="#f8a89c" d="M11.799999999999999 16h2.200v11h-2.200z" opacity=".55"/><ellipse fill="#f2d028" cx="14.1" cy="32.600" rx="3.500" ry="1.500"/><rect fill="#3858a8" x="6.8" y="34.200" width="13.600" height="3.800"/><rect fill="#f4d4dc" x="6.8" y="38.600" width="13.600" height="4.200"/><rect fill="#e890a0" x="6.8" y="40.200" width="13.600" height="1.200"/></svg></div>
<div class="t" style="left:443.75px;top:611px;font-size:12.5px;line-height:16px;color:#5a5a5a;"><span style="letter-spacing:0.09px">Размораживатель </span><span style="letter-spacing:-0.10px">стёкол </span><span style="letter-spacing:0.03px">и </span><span style="letter-spacing:0.37px">замков </span><span style="letter-spacing:-0.19px">'Антилед', </span><span style="letter-spacing:0.03px">спрей </span><span style="letter-spacing:-0.01px">500 </span><span style="letter-spacing:-0.61px">мл </span><span style="letter-spacing:-0.34px">(АС-135 </span><span style="letter-spacing:0.08px">Астрохим)</span></div>
<div class="t" style="left:1069.07px;top:611px;font-size:12.2px;line-height:16px;color:#5a5a5a;letter-spacing:-0.453px;">AC0001DS</div>
<div class="t" style="left:1229.15px;top:611px;font-size:12.5px;line-height:16px;color:#5a5a5a;letter-spacing:0.149px;">Автохимия</div>
<div class="t" style="left:1505.11px;top:611px;font-size:12.5px;line-height:16px;color:#5a5a5a;">990 ₸</div>
<div class="t" style="left:1610.11px;top:611px;font-size:12.5px;line-height:16px;color:#5a5a5a;">990 ₸</div>
<svg class="abs" style="left:1690px;top:614.3px" width="12.2" height="10.2" viewBox="0 0 12.2 10.2"><path fill="none" stroke="#74c47c" stroke-width="2.900" d="M1.100 5.200l3.500 3.400L11.100 1.500"/></svg>
<div class="btn" style="left:1754px;top:603px;width:110px;height:31px"></div>
<svg class="abs" style="left:1762.5px;top:612px" width="12.2" height="12" viewBox="0 0 12.2 12"><g fill="#555"><path d="M0 12l.7-3.400 2.700 2.700z"/><path d="M1.300 7.900L7.700 1.500l2.800 2.800-6.400 6.400z"/><path d="M8.400.8l.6-.6c.3-.3.900-.3 1.200 0l1.600 1.600c.3.300.3.900 0 1.200l-.6.600z"/></g></svg>
<div class="t" style="left:1777.84px;top:611px;font-size:12.6px;line-height:16px;color:#555;letter-spacing:0.148px;">Править</div>
<svg class="abs" style="left:1843.5px;top:616.3px" width="9" height="4.5" viewBox="0 0 9 4.5"><polygon fill="#444" points="0,0 9,0 4.5,4.5"/></svg>
<div class="row" style="top:650px;height:62px;background:#fff"></div>
<div class="cb" style="left:258px;top:672px"></div>
<div class="t" style="left:303.54px;top:673px;font-size:12.6px;line-height:16px;color:#5a5a5a;letter-spacing:0.148px;">423</div>
<div class="th" style="left:365.5px;top:653px;width:46px;height:55px"><svg width="44" height="53" viewBox="0 0 44 53"><rect fill="#e8e8e8" x="3.500" y="4.200" width="36.500" height="44.600"/><path fill="#101012" d="M16.400 8.200c0-1.300 1.700-2 5.700-2s5.700.7 5.700 2V45c0 .4-2 .8-5.700.8s-5.700-.4-5.700-.8z"/><rect fill="#8a8a90" x="16.600" y="15.800" width="11" height=".9"/><rect fill="#1e232b" x="16.400" y="16.700" width="11.400" height="28"/><rect fill="#e0dcdc" x="19" y="20.500" width="6" height="1.600"/><rect fill="#c2343c" x="16.400" y="23.800" width="11.400" height="2.600"/><rect fill="#d8d8dc" x="18" y="27" width="8" height="1.600"/><path fill="#7fa8c8" d="M19.500 31l6.500-1.500v7l-3 2.500-3.500-2z" opacity=".7"/><rect fill="#3a3e46" x="16.400" y="43" width="11.400" height="2"/></svg></div>
<div class="t" style="left:443.75px;top:673px;font-size:12.5px;line-height:16px;color:#5a5a5a;"><span style="letter-spacing:-0.28px">Жидкая </span><span style="letter-spacing:-0.27px">резина </span><span style="letter-spacing:0.51px">'черный', </span><span style="letter-spacing:0.13px">аэрозоль </span><span style="letter-spacing:-0.01px">650 </span><span style="letter-spacing:-0.61px">мл </span><span style="letter-spacing:-0.59px">(AVS </span><span style="letter-spacing:-0.33px">AVK-302)</span></div>
<div class="t" style="left:1069.07px;top:673px;font-size:12.2px;line-height:16px;color:#5a5a5a;letter-spacing:-0.444px;">AC0001LR</div>
<div class="t" style="left:1229.15px;top:673px;font-size:12.5px;line-height:16px;color:#5a5a5a;letter-spacing:0.149px;">Автохимия</div>
<div class="t" style="left:1494.68px;top:673px;font-size:12.5px;line-height:16px;color:#5a5a5a;">2 155 ₸</div>
<div class="t" style="left:1599.68px;top:673px;font-size:12.5px;line-height:16px;color:#5a5a5a;">2 155 ₸</div>
<svg class="abs" style="left:1690px;top:676.3px" width="12.2" height="10.2" viewBox="0 0 12.2 10.2"><path fill="none" stroke="#74c47c" stroke-width="2.900" d="M1.100 5.200l3.500 3.400L11.100 1.500"/></svg>
<div class="btn" style="left:1754px;top:665px;width:110px;height:31px"></div>
<svg class="abs" style="left:1762.5px;top:674px" width="12.2" height="12" viewBox="0 0 12.2 12"><g fill="#555"><path d="M0 12l.7-3.400 2.700 2.700z"/><path d="M1.300 7.900L7.700 1.500l2.800 2.800-6.400 6.400z"/><path d="M8.400.8l.6-.6c.3-.3.900-.3 1.200 0l1.600 1.600c.3.300.3.900 0 1.200l-.6.600z"/></g></svg>
<div class="t" style="left:1777.84px;top:673px;font-size:12.6px;line-height:16px;color:#555;letter-spacing:0.148px;">Править</div>
<svg class="abs" style="left:1843.5px;top:678.3px" width="9" height="4.5" viewBox="0 0 9 4.5"><polygon fill="#444" points="0,0 9,0 4.5,4.5"/></svg>
<div class="row" style="top:712px;height:62px;background:#fcfdfe"></div>
<div class="cb" style="left:258px;top:734px"></div>
<div class="t" style="left:303.54px;top:735px;font-size:12.6px;line-height:16px;color:#5a5a5a;letter-spacing:0.148px;">424</div>
<div class="th" style="left:361.0px;top:715px;width:55px;height:55px"><svg width="53" height="53" viewBox="0 0 53 53"><defs><linearGradient id="g424" x1="0" y1="0" x2="0" y2="1"><stop offset="0" stop-color="#fbfbfb"/><stop offset="1" stop-color="#bcc2c3"/></linearGradient><linearGradient id="h424" x1="0" y1="0" x2="0" y2="1"><stop offset="0" stop-color="#e8eaea"/><stop offset="1" stop-color="#cfd3d4"/></linearGradient></defs><rect fill="url(#g424)" x="3.700" y="2" width="45.100" height="36.600"/><rect fill="url(#h424)" x="3.700" y="38.600" width="45.100" height="10.200"/><path fill="#151517" d="M19.900 8.600c0-1.100 2-1.800 6.400-1.800s6.500.7 6.500 1.800V42c0 1-2 1.700-6.500 1.700s-6.400-.7-6.400-1.700z"/><path fill="#bcae3c" d="M20.400 8c1-.8 3-1.100 5.900-1.100s5 .3 6 1.100c-1 .6-3 .9-6 .9s-4.900-.3-5.900-.9z"/><rect fill="#b82c2c" x="19.900" y="23" width="12.900" height="1.300"/><rect fill="#e8e6e6" x="21.200" y="25.300" width="10.300" height="2.600"/><path fill="#151517" d="M23 25.300h.8v2.600H23zM25.500 25.300h.8v2.600h-.8zM28 25.300h.8v2.600H28z"/><path fill="#e9e5a6" d="M19.900 29.200h12.900V42c0 1-2 1.700-6.500 1.700s-6.400-.7-6.400-1.700z"/><path fill="#f6f6f2" d="M20.400 33c3.500-1.600 8-1.600 12 0v7c-4 1.600-8.500 1.600-12 0z"/><path fill="#202022" d="M21.500 35l5.500-2 4.500 2.600.5 3-3-1.700-4 1.600z"/></svg></div>
<div class="t" style="left:443.75px;top:735px;font-size:12.5px;line-height:16px;color:#5a5a5a;"><span style="letter-spacing:0.12px">Мовиль </span><span style="letter-spacing:0.27px">'консервирующий </span><span style="letter-spacing:-0.01px">состав' </span><span style="letter-spacing:0.02px">аэрозоль </span><span style="letter-spacing:0.05px">520 </span><span style="letter-spacing:-0.62px">мл </span><span style="letter-spacing:-0.64px">(AVS </span><span style="letter-spacing:-0.33px">AVK-106)</span></div>
<div class="t" style="left:1069.07px;top:735px;font-size:12.2px;line-height:16px;color:#5a5a5a;letter-spacing:-0.449px;">AC0001PB</div>
<div class="t" style="left:1229.15px;top:735px;font-size:12.5px;line-height:16px;color:#5a5a5a;letter-spacing:0.149px;">Автохимия</div>
<div class="t" style="left:1519.01px;top:735px;font-size:12.5px;line-height:16px;color:#5a5a5a;">0 ₸</div>
<div class="t" style="left:1624.01px;top:735px;font-size:12.5px;line-height:16px;color:#5a5a5a;">0 ₸</div>
<svg class="abs" style="left:1690px;top:738.3px" width="12.2" height="10.2" viewBox="0 0 12.2 10.2"><path fill="none" stroke="#74c47c" stroke-width="2.900" d="M1.100 5.200l3.500 3.400L11.100 1.500"/></svg>
<div class="btn" style="left:1754px;top:727px;width:110px;height:31px"></div>
<svg class="abs" style="left:1762.5px;top:736px" width="12.2" height="12" viewBox="0 0 12.2 12"><g fill="#555"><path d="M0 12l.7-3.400 2.700 2.700z"/><path d="M1.300 7.900L7.700 1.500l2.800 2.800-6.400 6.400z"/><path d="M8.400.8l.6-.6c.3-.3.900-.3 1.200 0l1.600 1.600c.3.300.3.900 0 1.200l-.6.600z"/></g></svg>
<div class="t" style="left:1777.84px;top:735px;font-size:12.6px;line-height:16px;color:#555;letter-spacing:0.148px;">Править</div>
<svg class="abs" style="left:1843.5px;top:740.3px" width="9" height="4.5" viewBox="0 0 9 4.5"><polygon fill="#444" points="0,0 9,0 4.5,4.5"/></svg>
<div class="row" style="top:774px;height:38px;background:#fff"></div>
<div class="cb" style="left:258px;top:784px"></div>
<div class="t" style="left:303.54px;top:785px;font-size:12.6px;line-height:16px;color:#5a5a5a;letter-spacing:0.148px;">425</div>
<div class="t" style="left:443.75px;top:785px;font-size:12.5px;line-height:16px;color:#5a5a5a;"><span style="letter-spacing:0.05px">Антизапотеватель, </span><span style="letter-spacing:0.15px">спрей </span><span style="letter-spacing:-0.02px">125 </span><span style="letter-spacing:-0.62px">мл </span><span style="letter-spacing:-0.40px">(АС-400 </span><span style="letter-spacing:0.11px">Астрохим)</span></div>
<div class="t" style="left:1069.07px;top:785px;font-size:12.2px;line-height:16px;color:#5a5a5a;letter-spacing:-0.457px;">AC0001PG</div>
<div class="t" style="left:1229.15px;top:785px;font-size:12.5px;line-height:16px;color:#5a5a5a;letter-spacing:0.149px;">Автохимия</div>
<div class="t" style="left:1505.11px;top:785px;font-size:12.5px;line-height:16px;color:#5a5a5a;">520 ₸</div>
<div class="t" style="left:1610.11px;top:785px;font-size:12.5px;line-height:16px;color:#5a5a5a;">520 ₸</div>
<svg class="abs" style="left:1690px;top:788.3px" width="12.2" height="10.2" viewBox="0 0 12.2 10.2"><path fill="none" stroke="#74c47c" stroke-width="2.900" d="M1.100 5.200l3.500 3.400L11.100 1.500"/></svg>
<div class="btn" style="left:1754px;top:777px;width:110px;height:31px"></div>
<svg class="abs" style="left:1762.5px;top:786px" width="12.2" height="12" viewBox="0 0 12.2 12"><g fill="#555"><path d="M0 12l.7-3.400 2.700 2.700z"/><path d="M1.300 7.900L7.700 1.500l2.800 2.800-6.400 6.400z"/><path d="M8.400.8l.6-.6c.3-.3.900-.3 1.200 0l1.600 1.600c.3.300.3.900 0 1.200l-.6.600z"/></g></svg>
<div class="t" style="left:1777.84px;top:785px;font-size:12.6px;line-height:16px;color:#555;letter-spacing:0.148px;">Править</div>
<svg class="abs" style="left:1843.5px;top:790.3px" width="9" height="4.5" viewBox="0 0 9 4.5"><polygon fill="#444" points="0,0 9,0 4.5,4.5"/></svg>
<div class="row" style="top:812px;height:62px;background:#fcfdfe"></div>
<div class="cb" style="left:258px;top:834px"></div>
<div class="t" style="left:303.54px;top:835px;font-size:12.6px;line-height:16px;color:#5a5a5a;letter-spacing:0.148px;">426</div>
<div class="th" style="left:361.0px;top:815px;width:55px;height:55px"><svg width="53" height="53" viewBox="0 0 53 53"><defs><radialGradient id="g426" cx=".5" cy=".8" r=".7"><stop offset="0" stop-color="#dedede"/><stop offset="1" stop-color="#cfcfcf"/></radialGradient></defs><rect fill="url(#g426)" x="3.700" y="4" width="44.800" height="44.800"/><rect fill="#d94a58" x="22.200" y="4" width="6.900" height="30.500"/><path stroke="#f3b4bc" stroke-width="1.300" stroke-dasharray="1.500 1.700" d="M24.300 6.500v27M27 7.500v26"/><rect fill="#b83040" x="22.200" y="4" width="6.900" height="2.400" opacity=".7"/><path fill="#e84e32" d="M23 34.500h5.400l.2 3.500c.2 1.800 1.300 2.700 3.300 3.300 2.200.7 3.700 1.200 3.700 2.100 0 1.400-4.300 2.400-9.900 2.400s-9.900-1-9.900-2.400c0-.9 1.500-1.400 3.700-2.100 2-.6 3.100-1.500 3.300-3.300z"/></svg></div>
<div class="t" style="left:443.75px;top:835px;font-size:12.5px;line-height:16px;color:#5a5a5a;"><span style="letter-spacing:0.22px">Притирочная </span><span style="letter-spacing:-0.16px">паста </span><span style="letter-spacing:0.04px">'Алмазная' </span><span style="letter-spacing:-0.39px">для </span><span style="letter-spacing:0.14px">клапанов </span><span style="letter-spacing:-0.37px">10 </span><span style="letter-spacing:0.01px">гр </span><span style="letter-spacing:-0.07px">(3305 </span><span style="letter-spacing:-0.23px">ВМПАВТО)</span></div>
<div class="t" style="left:1069.07px;top:835px;font-size:12.2px;line-height:16px;color:#5a5a5a;letter-spacing:-0.440px;">AC0001PL</div>
<div class="t" style="left:1229.15px;top:835px;font-size:12.5px;line-height:16px;color:#5a5a5a;letter-spacing:0.149px;">Автохимия</div>
<div class="t" style="left:1505.11px;top:835px;font-size:12.5px;line-height:16px;color:#5a5a5a;">545 ₸</div>
<div class="t" style="left:1610.11px;top:835px;font-size:12.5px;line-height:16px;color:#5a5a5a;">545 ₸</div>
<svg class="abs" style="left:1690px;top:838.3px" width="12.2" height="10.2" viewBox="0 0 12.2 10.2"><path fill="none" stroke="#74c47c" stroke-width="2.900" d="M1.100 5.200l3.500 3.400L11.100 1.500"/></svg>
<div class="btn" style="left:1754px;top:827px;width:110px;height:31px"></div>
<svg class="abs" style="left:1762.5px;top:836px" width="12.2" height="12" viewBox="0 0 12.2 12"><g fill="#555"><path d="M0 12l.7-3.400 2.700 2.700z"/><path d="M1.300 7.900L7.700 1.500l2.800 2.800-6.400 6.400z"/><path d="M8.400.8l.6-.6c.3-.3.900-.3 1.200 0l1.600 1.600c.3.300.3.900 0 1.200l-.6.600z"/></g></svg>
<div class="t" style="left:1777.84px;top:835px;font-size:12.6px;line-height:16px;color:#555;letter-spacing:0.148px;">Править</div>
<svg class="abs" style="left:1843.5px;top:840.3px" width="9" height="4.5" viewBox="0 0 9 4.5"><polygon fill="#444" points="0,0 9,0 4.5,4.5"/></svg>
<div class="row" style="top:874px;height:38px;background:#fff"></div>
<div class="cb" style="left:258px;top:884px"></div>
<div class="t" style="left:303.54px;top:885px;font-size:12.6px;line-height:16px;color:#5a5a5a;letter-spacing:0.148px;">427</div>
<div class="t" style="left:443.75px;top:885px;font-size:12.5px;line-height:16px;color:#5a5a5a;"><span style="letter-spacing:0.05px">Полироль </span><span style="letter-spacing:0.13px">кузова </span><span style="letter-spacing:0.27px">воск </span><span style="letter-spacing:0.02px">карнаубы </span><span style="letter-spacing:0.05px">300 </span><span style="letter-spacing:-0.62px">мл </span><span style="letter-spacing:-0.64px">(AVS </span><span style="letter-spacing:-0.33px">AVK-064)</span></div>
<div class="t" style="left:1069.07px;top:885px;font-size:12.2px;line-height:16px;color:#5a5a5a;letter-spacing:-0.449px;">AC0001PS</div>
<div class="t" style="left:1229.15px;top:885px;font-size:12.5px;line-height:16px;color:#5a5a5a;letter-spacing:0.149px;">Автохимия</div>
<div class="t" style="left:1505.11px;top:885px;font-size:12.5px;line-height:16px;color:#5a5a5a;">670 ₸</div>
<div class="t" style="left:1610.11px;top:885px;font-size:12.5px;line-height:16px;color:#5a5a5a;">670 ₸</div>
<svg class="abs" style="left:1690px;top:888.3px" width="12.2" height="10.2" viewBox="0 0 12.2 10.2"><path fill="none" stroke="#74c47c" stroke-width="2.900" d="M1.100 5.200l3.500 3.400L11.100 1.500"/></svg>
<div class="btn" style="left:1754px;top:877px;width:110px;height:31px"></div>
<svg class="abs" style="left:1762.5px;top:886px" width="12.2" height="12" viewBox="0 0 12.2 12"><g fill="#555"><path d="M0 12l.7-3.400 2.700 2.700z"/><path d="M1.300 7.900L7.700 1.500l2.800 2.800-6.400 6.400z"/><path d="M8.400.8l.6-.6c.3-.3.900-.3 1.200 0l1.600 1.600c.3.300.3.900 0 1.200l-.6.600z"/></g></svg>
<div class="t" style="left:1777.84px;top:885px;font-size:12.6px;line-height:16px;color:#555;letter-spacing:0.148px;">Править</div>
<svg class="abs" style="left:1843.5px;top:890.3px" width="9" height="4.5" viewBox="0 0 9 4.5"><polygon fill="#444" points="0,0 9,0 4.5,4.5"/></svg>
</body></html>
